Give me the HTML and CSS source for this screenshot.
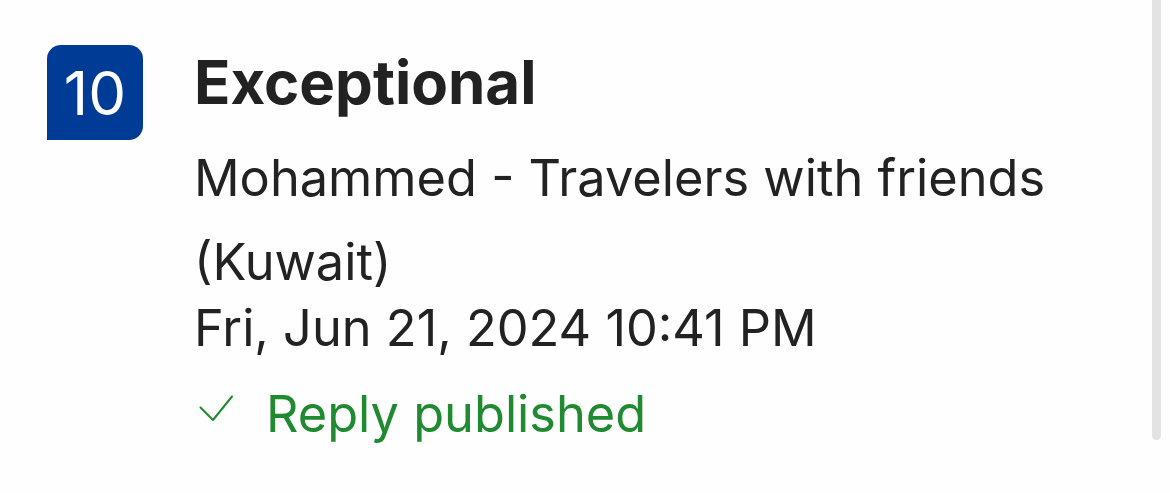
FILE: index.html
```html
<!DOCTYPE html>
<html>
<head>
<meta charset="utf-8">
<link rel="stylesheet" href="styles.css">
</head>
<body>
<div class="page">
  <div class="review">
    <div class="score">10</div>
    <div class="body">
      <div class="title">Exceptional</div>
      <div class="line name">Mohammed - Travelers with friends</div>
      <div class="line country">(Kuwait)</div>
      <div class="line date">Fri, Jun 21, 2024 10:41 PM</div>
      <div class="line status">
        <svg class="check" width="35" height="27" viewBox="0 0 35 27"><path d="M1.5 12.5 L14 25 L33 1.5" fill="none" stroke="#1f8a2f" stroke-width="2" stroke-linecap="round" stroke-linejoin="round"/></svg>
        <span>Reply published</span>
      </div>
    </div>
  </div>
  <div class="scrollbar"></div>
</div>
</body>
</html>
```
FILE: styles.css
```css
html, body {
  margin: 0;
  padding: 0;
  background: #fefefe;
}
.page {
  width: 1170px;
  height: 493px;
  position: relative;
  font-family: Inter, "Liberation Sans", sans-serif;
  color: #222;
}
.review {
  display: flex;
  padding: 45px 0 0 47px;
  gap: 51px;
}
.score {
  width: 96px;
  height: 95px;
  background: #003b95;
  color: #fff;
  border-radius: 14px 14px 14px 0;
  font-size: 60px;
  font-weight: 400;
  display: flex;
  align-items: center;
  justify-content: center;
  flex-shrink: 0;
}
.body {
  display: flex;
  flex-direction: column;
}
.title {
  font-size: 60px;
  font-weight: 700;
  line-height: 72px;
  margin-top: 1px;
}
.line {
  font-size: 50.5px;
  line-height: 60px;
}
.name {
  margin-top: 30px;
}
.country {
  margin-top: 24px;
}
.date {
  margin-top: 6px;
}
.status {
  display: flex;
  align-items: flex-start;
  margin-top: 26px;
  color: #1f8a2f;
}
.check {
  margin: 11px 32px 0 5px;
  flex-shrink: 0;
}
.scrollbar {
  position: absolute;
  top: 0;
  left: 1152px;
  width: 9px;
  height: 440px;
  background: #e3e3e3;
  border-radius: 0 0 5px 5px;
}
```
